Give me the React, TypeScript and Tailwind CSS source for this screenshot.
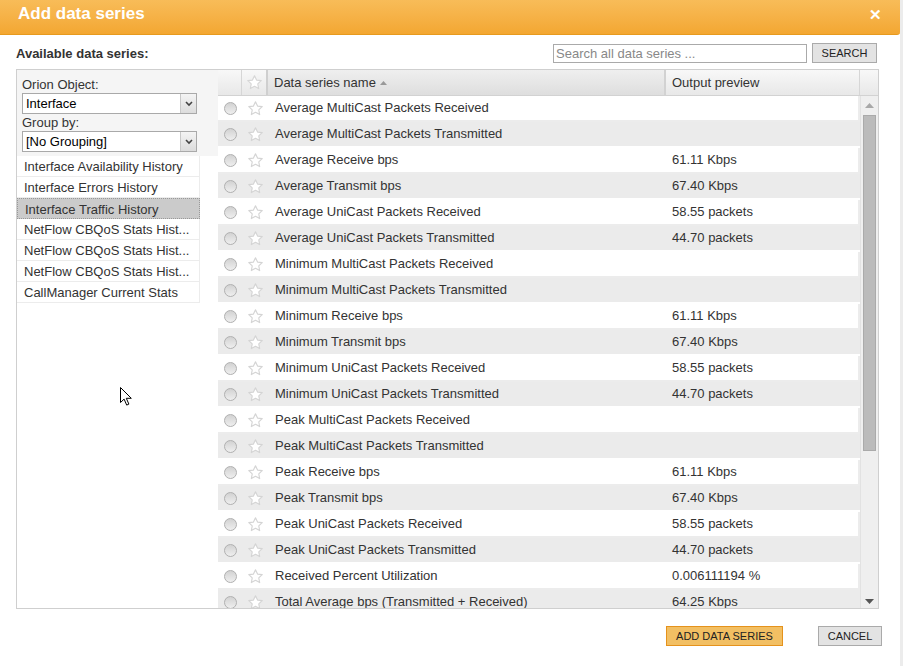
import React from "react";

const ROWS: [string, string][] = [
  ["Average MultiCast Packets Received", ""],
  ["Average MultiCast Packets Transmitted", ""],
  ["Average Receive bps", "61.11 Kbps"],
  ["Average Transmit bps", "67.40 Kbps"],
  ["Average UniCast Packets Received", "58.55 packets"],
  ["Average UniCast Packets Transmitted", "44.70 packets"],
  ["Minimum MultiCast Packets Received", ""],
  ["Minimum MultiCast Packets Transmitted", ""],
  ["Minimum Receive bps", "61.11 Kbps"],
  ["Minimum Transmit bps", "67.40 Kbps"],
  ["Minimum UniCast Packets Received", "58.55 packets"],
  ["Minimum UniCast Packets Transmitted", "44.70 packets"],
  ["Peak MultiCast Packets Received", ""],
  ["Peak MultiCast Packets Transmitted", ""],
  ["Peak Receive bps", "61.11 Kbps"],
  ["Peak Transmit bps", "67.40 Kbps"],
  ["Peak UniCast Packets Received", "58.55 packets"],
  ["Peak UniCast Packets Transmitted", "44.70 packets"],
  ["Received Percent Utilization", "0.006111194 %"],
  ["Total Average bps (Transmitted + Received)", "64.25 Kbps"],
];

const GROUPS = [
  "Interface Availability History",
  "Interface Errors History",
  "Interface Traffic History",
  "NetFlow CBQoS Stats Hist...",
  "NetFlow CBQoS Stats Hist...",
  "NetFlow CBQoS Stats Hist...",
  "CallManager Current Stats",
];

function Star({ color = "#d4d4d4" }: { color?: string }) {
  return (
    <svg width="17" height="17" viewBox="0 0 24 24" fill="#fff" stroke={color} strokeWidth="1.6" strokeLinejoin="round">
      <path d="M12 2.5l2.9 6.1 6.6.8-4.9 4.6 1.3 6.6L12 17.3l-5.9 3.3 1.3-6.6-4.9-4.6 6.6-.8z" />
    </svg>
  );
}

function Radio() {
  return <span className="block w-[13px] h-[13px] rounded-full border border-[#b0b0b0] bg-gradient-to-b from-[#d2d2d2] to-[#efefef]" />;
}

function Select({ value }: { value: string }) {
  return (
    <div className="flex h-[21px] w-[175px] border border-[#a9a9a9] bg-white">
      <span className="flex-1 px-[3px] text-[13px] leading-[19px] text-black">{value}</span>
      <span className="w-[16px] flex items-center justify-center border-l border-[#c8c8c8] bg-gradient-to-b from-[#f4f4f4] to-[#dcdcdc]">
        <svg width="8" height="6" viewBox="0 0 8 6"><path d="M1 1l3 3 3-3" fill="none" stroke="#444" strokeWidth="1.6" /></svg>
      </span>
    </div>
  );
}

export default function App() {
  return (
    <div className="relative w-[906px] h-[666px] bg-white overflow-hidden text-[#333]" style={{ fontFamily: '"Liberation Sans", Arial, sans-serif' }}>
      <div className="w-[903px] h-full border-r-[3px] border-[#ececec] flex flex-col">
        {/* header */}
        <div className="h-[35px] w-[900px] flex items-start justify-between rounded-br-[3px] border-b border-[#e79a1e] bg-gradient-to-b from-[#f8bc58] to-[#f3a731] px-[18px]">
          <span className="pt-[3px] text-[17px] font-bold text-white leading-[22px]">Add data series</span>
          <span className="pt-[6px] text-[15px] font-bold text-white leading-[18px]">✕</span>
        </div>

        {/* toolbar */}
        <div className="flex items-end justify-between pl-[16px] pr-[23px] pt-[8px]">
          <span className="text-[13px] font-bold text-[#333] leading-[16px] pb-[1px]">Available data series:</span>
          <div className="flex items-center gap-[5px]">
            <div className="w-[254px] h-[19px] border border-[#aaa] bg-white px-[2px] text-[13px] leading-[17px] text-[#888]">Search all data series ...</div>
            <button className="w-[65px] h-[20px] border border-[#aaa] bg-[#e3e3e3] text-[11px] text-[#222] leading-[18px]">SEARCH</button>
          </div>
        </div>

        {/* main panel */}
        <div className="mt-[6px] ml-[16px] w-[863px] h-[540px] border border-[#cfcfcf] flex">
          {/* left */}
          <div className="w-[201px] flex flex-col">
            <div className="h-[86px] bg-[#f5f5f5] pl-[5px] pt-[7px] flex flex-col">
              <span className="text-[13px] leading-[16px] text-[#333]">Orion Object:</span>
              <Select value="Interface" />
              <span className="text-[13px] leading-[16px] text-[#333] mt-[1px]">Group by:</span>
              <Select value="[No Grouping]" />
            </div>
            <div className="w-[183px] flex flex-col">
              {GROUPS.map((g, i) => (
                <div
                  key={i}
                  className={
                    "h-[21px] px-[7px] text-[13px] leading-[21px] whitespace-nowrap border-b border-r " +
                    (i === 2 ? "bg-[#cbcbcb] border border-dotted border-[#999]" : "bg-white border-[#ececec]")
                  }
                >
                  {g}
                </div>
              ))}
            </div>
          </div>

          {/* table */}
          <div className="flex-1 flex flex-col">
            <div className="h-[26px] flex border-b border-[#d2d2d2] bg-gradient-to-b from-[#f8f8f8] to-[#e8e8e8] text-[13px] text-[#333]">
              <div className="w-[24px] border-r border-[#d6d6d6]" />
              <div className="w-[26px] border-r-2 border-[#cfcfcf] flex items-center justify-center"><Star color="#d6d6d6" /></div>
              <div className="w-[398px] border-r-2 border-[#d2d2d2] bg-gradient-to-b from-[#efefef] to-[#dedede] px-[6px] leading-[26px] flex items-center gap-[4px]">
                Data series name
                <svg width="7" height="5" viewBox="0 0 7 5"><path d="M0 5L3.5 1 7 5z" fill="#999" /></svg>
              </div>
              <div className="w-[194px] border-r border-[#d6d6d6] px-[6px] leading-[26px]">Output preview</div>
              <div className="flex-1" />
            </div>
            <div className="flex-1 flex overflow-hidden">
              <div className="flex-1 flex flex-col">
                {ROWS.map(([name, out], i) => (
                  <div
                    key={i}
                    className={
                      "h-[26px] shrink-0 flex items-center text-[13px] text-[#333] border-b-2 " +
                      (i % 2 === 0 ? "bg-white border-[#ececec] border-r-2" : "bg-[#ebebeb] border-white")
                    }
                  >
                    <div className="w-[24px] flex justify-center pl-[1px]"><Radio /></div>
                    <div className="w-[26px] flex justify-center"><Star /></div>
                    <div className="w-[398px] px-[7px] whitespace-nowrap">{name}</div>
                    <div className="px-[6px] whitespace-nowrap">{out}</div>
                  </div>
                ))}
              </div>
              {/* scrollbar */}
              <div className="w-[18px] bg-[#efefef] border-l border-[#e2e2e2] flex flex-col items-center pt-[7px] pb-[4px]">
                <svg width="9" height="5" viewBox="0 0 9 5"><path d="M0 5L4.5 0 9 5z" fill="#a8a8a8" /></svg>
                <div className="mt-[7px] w-[13px] h-[336px] bg-[#bbbbbb] border border-[#aaa]" />
                <div className="flex-1" />
                <svg width="9" height="5" viewBox="0 0 9 5"><path d="M0 0h9L4.5 5z" fill="#555" /></svg>
              </div>
            </div>
          </div>
        </div>

        {/* footer */}
        <div className="flex justify-end gap-[35px] pr-[18px] mt-[17px]">
          <button className="w-[117px] h-[20px] border border-[#e5921c] bg-[#f2bf63] text-[11px] text-[#222] leading-[18px]">ADD DATA SERIES</button>
          <button className="w-[64px] h-[20px] border border-[#aaa] bg-[#e3e3e3] text-[11px] text-[#222] leading-[18px]">CANCEL</button>
        </div>
      </div>

      {/* mouse pointer */}
      <svg className="absolute left-[120px] top-[387px]" width="13" height="20" viewBox="0 0 13 20">
        <path d="M0.5 0.5v15l3.6-3.4 2.6 6 2.2-1-2.6-5.8h5z" fill="#fff" stroke="#000" strokeWidth="1" strokeLinejoin="round" />
      </svg>
    </div>
  );
}
